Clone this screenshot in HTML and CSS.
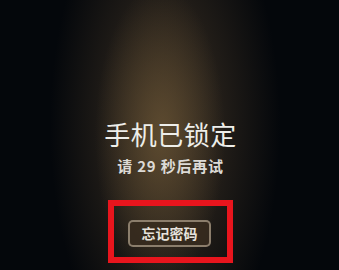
FILE: index.html
```html
<!DOCTYPE html>
<html lang="zh-CN">
<head>
<meta charset="utf-8">
<link rel="stylesheet" href="styles.css">
</head>
<body>
<main class="screen">
  <h1 class="title">手机已锁定</h1>
  <p class="hint">请 29 秒后再试</p>
  <div class="highlight">
    <button class="forgot">忘记密码</button>
  </div>
</main>
</body>
</html>
```
FILE: styles.css
```css
html, body {
  margin: 0;
  padding: 0;
}
body {
  width: 339px;
  height: 270px;
  overflow: hidden;
  background-color: #04070b;
  font-family: "Noto Sans CJK SC", "Noto Sans", sans-serif;
}
.screen {
  width: 339px;
  height: 270px;
  display: flex;
  flex-direction: column;
  align-items: center;
  box-sizing: border-box;
  padding-top: 116px;
  padding-left: 2px;
  background:
    radial-gradient(ellipse 65px 150px at 160px 135px, rgba(105, 84, 52, 0.7), rgba(105, 84, 52, 0) 100%),
    radial-gradient(ellipse 115px 250px at 165px 125px, rgba(70, 56, 40, 0.9), rgba(50, 40, 30, 0) 100%),
    #04070b;
}
.title {
  margin: 0;
  font-size: 26px;
  line-height: 36px;
  font-weight: 400;
  color: #eeeeea;
  letter-spacing: 0.5px;
}
.hint {
  margin: 3px 0 0;
  font-size: 15px;
  line-height: 21px;
  font-weight: 700;
  color: #dcdad6;
  letter-spacing: 0.8px;
}
.highlight {
  margin-top: 24px;
  border: 6px solid #e8151d;
  padding: 14px 16px 10px 14px;
  display: flex;
}
.forgot {
  width: 83px;
  height: 27px;
  box-sizing: border-box;
  border: 2px solid rgba(170, 155, 135, 0.75);
  border-radius: 5px;
  background: rgba(55, 44, 30, 0.85);
  color: #e6e2dc;
  font-family: "Noto Sans CJK SC", "Noto Sans", sans-serif;
  font-size: 14px;
  font-weight: 700;
  padding: 0;
  line-height: 23px;
}
```
